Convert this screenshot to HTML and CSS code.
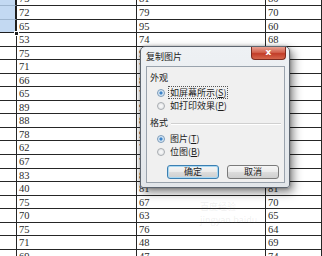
FILE: index.html
```html
<!DOCTYPE html>
<html>
  <head>
    <title>复制图片</title>
    <link rel="stylesheet" href="styles.css">
  </head>
  <body>
    <div class="sheet">
      <div class="cell head sel"></div><div class="cell">73</div><div class="cell">81</div><div class="cell">80</div>
      <div class="cell head sel"></div><div class="cell">72</div><div class="cell">79</div><div class="cell">70</div>
      <div class="cell head sel last"></div><div class="cell">65</div><div class="cell">95</div><div class="cell">60</div>
      <div class="cell head"></div><div class="cell">53</div><div class="cell">74</div><div class="cell">68</div>
      <div class="cell head"></div><div class="cell">75</div><div class="cell">90</div><div class="cell"></div>
      <div class="cell head"></div><div class="cell">71</div><div class="cell">78</div><div class="cell"></div>
      <div class="cell head"></div><div class="cell">66</div><div class="cell">85</div><div class="cell"></div>
      <div class="cell head"></div><div class="cell">65</div><div class="cell">77</div><div class="cell"></div>
      <div class="cell head"></div><div class="cell">89</div><div class="cell">91</div><div class="cell"></div>
      <div class="cell head"></div><div class="cell">88</div><div class="cell">86</div><div class="cell"></div>
      <div class="cell head"></div><div class="cell">78</div><div class="cell">92</div><div class="cell"></div>
      <div class="cell head"></div><div class="cell">62</div><div class="cell">71</div><div class="cell"></div>
      <div class="cell head"></div><div class="cell">67</div><div class="cell">73</div><div class="cell"></div>
      <div class="cell head"></div><div class="cell">83</div><div class="cell">80</div><div class="cell"></div>
      <div class="cell head"></div><div class="cell">40</div><div class="cell">81</div><div class="cell">81</div>
      <div class="cell head"></div><div class="cell">75</div><div class="cell">67</div><div class="cell">70</div>
      <div class="cell head"></div><div class="cell">70</div><div class="cell">63</div><div class="cell">65</div>
      <div class="cell head"></div><div class="cell">75</div><div class="cell">76</div><div class="cell">64</div>
      <div class="cell head"></div><div class="cell">71</div><div class="cell">48</div><div class="cell">69</div>
      <div class="cell head"></div><div class="cell">69</div><div class="cell">47</div><div class="cell">74</div>
    </div>

    <!-- selection fill handle -->
    <div class="handle"></div>

    <div class="watermark">
      <div>百度经验</div>
      <div>jingyan.baidu</div>
    </div>

    <div class="dialog">
      <div class="titlebar">
        <span class="title">复制图片</span>
        <span class="close">x</span>
      </div>
      <div class="client">
        <div class="group">外观</div>
        <div class="radio checked"><span class="dot"></span><span class="label focus">如屏幕所示(<u>S</u>)</span></div>
        <div class="radio"><span class="dot"></span><span class="label">如打印效果(<u>P</u>)</span></div>
        <div class="group line">格式</div>
        <div class="radio checked"><span class="dot"></span><span class="label">图片(<u>T</u>)</span></div>
        <div class="radio"><span class="dot"></span><span class="label">位图(<u>B</u>)</span></div>
        <div class="buttons">
          <span class="btn default">确定</span>
          <span class="btn">取消</span>
        </div>
      </div>
    </div>
  </body>
</html>
```

FILE: styles.css
```css
body {
  margin: 0;
  padding: 0;
  width: 322px;
  height: 256px;
  overflow: hidden;
  position: relative;
  background: #fff;
  font-family: "Liberation Serif", serif;
}

/* Spreadsheet grid */
.sheet {
  display: grid;
  grid-template-columns: 17px 120px 129px 1fr;
  grid-auto-rows: 13.56px;
  margin-top: -7.56px;
}

.cell {
  box-sizing: border-box;
  border-right: 1px solid #262626;
  border-bottom: 1px solid #262626;
  font-size: 10.5px;
  line-height: 13px;
  padding-left: 2px;
  color: #2b2b2b;
  overflow: hidden;
}

.head.sel {
  background: #c3d9f2;
  border-bottom-color: #9fb6cf;
  border-right: 2px solid #1e1e1e;
}

.head.sel.last {
  border-bottom-color: #1e1e1e;
}

.handle {
  position: absolute;
  left: 14px;
  top: 31px;
  width: 3px;
  height: 3px;
  background: #1e1e1e;
  border: 1px solid #fff;
}

.watermark {
  position: absolute;
  left: 200px;
  top: 200px;
  font-family: "Noto Sans CJK SC", sans-serif;
  font-size: 9px;
  line-height: 13px;
  color: rgba(120, 120, 120, 0.12);
}

/* Dialog */
.dialog {
  position: absolute;
  left: 140px;
  top: 46px;
  width: 150px;
  height: 142px;
  box-sizing: border-box;
  border: 1px solid #5e6670;
  border-radius: 5px 5px 3px 3px;
  background: linear-gradient(#eef1f4, #e2e6ea);
  box-shadow: 3px 4px 10px rgba(0, 0, 0, 0.5), 0 0 3px rgba(0, 0, 0, 0.3);
  font-family: "Noto Sans CJK SC", sans-serif;
  font-size: 9px;
  color: #1c1c1c;
  display: flex;
  flex-direction: column;
}

.titlebar {
  height: 19px;
  display: flex;
  align-items: flex-start;
}

.title {
  padding: 4px 0 0 5px;
  line-height: 11px;
}

.close {
  margin-left: auto;
  margin-right: 3px;
  width: 35px;
  height: 13px;
  box-sizing: border-box;
  border: 1px solid #7b2a1f;
  border-top: none;
  border-radius: 0 0 4px 4px;
  background: linear-gradient(#e9a192, #d2614d 45%, #c23d29 55%, #d5664d);
  color: #fff;
  font-family: "DejaVu Sans", sans-serif;
  font-weight: bold;
  font-size: 9px;
  line-height: 11px;
  text-align: center;
}

.client {
  flex: 1;
  margin: 0 4px 4px 5px;
  padding: 5px 3px 0 3px;
  border: 1px solid #9aa3ad;
  background: #f0f0f0;
}

.group {
  line-height: 11px;
  height: 11px;
  margin-bottom: 3px;
}

.group.line {
  margin-top: 5px;
  margin-bottom: 4px;
  display: flex;
  align-items: center;
  gap: 3px;
}

.group.line::after {
  content: "";
  flex: 1;
  height: 1px;
  margin-top: 2px;
  background: #d0d0d0;
  border-bottom: 1px solid #fff;
}

.radio {
  height: 13px;
  display: flex;
  align-items: center;
  padding-left: 7px;
}

.dot {
  width: 8px;
  height: 8px;
  box-sizing: border-box;
  border-radius: 50%;
  border: 1px solid #a9adb1;
  background: radial-gradient(#fbfbfb, #dcdfe2);
  margin-right: 3px;
}

.radio.checked .dot {
  border-color: #7b9ab8;
  background: radial-gradient(#2f76bf 0, #4a8fd0 30%, #cfe2f3 45%, #eef4fa 100%);
}

.label {
  line-height: 11px;
  padding: 0 1px;
  border: 1px solid transparent;
}

.label.focus {
  border: 1px dotted #555;
}

.buttons {
  display: flex;
  gap: 8px;
  margin: 7px 0 0 17px;
}

.btn {
  width: 52px;
  height: 14px;
  box-sizing: border-box;
  border: 1px solid #7a7a7a;
  border-radius: 3px;
  background: linear-gradient(#f6f6f6, #eaeaea 50%, #dcdcdc 51%, #cfcfcf);
  text-align: center;
  line-height: 12px;
}

.btn.default {
  border-color: #3c7fb1;
  box-shadow: inset 0 0 0 1px #a8d8f3;
}
```
